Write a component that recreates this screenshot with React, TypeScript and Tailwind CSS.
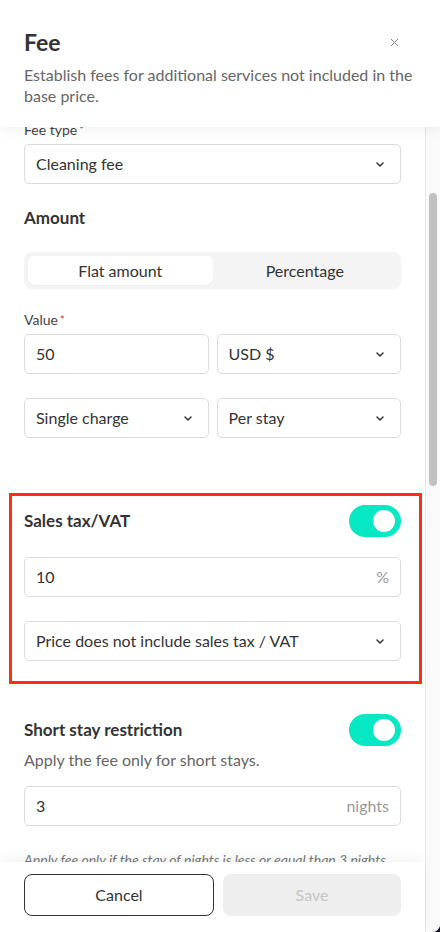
import { ReactNode } from "react";

function Chevron() {
  return (
    <svg width="8" height="5" viewBox="0 0 8 5" fill="none" className="shrink-0">
      <path d="M1 1 4 4 7 1" stroke="#333" strokeWidth="1.5" strokeLinecap="round" strokeLinejoin="round" />
    </svg>
  );
}

function SelectBox({ value }: { value: string }) {
  return (
    <div className="flex h-10 items-center justify-between rounded-[5px] border border-[#dcdcdc] bg-white pl-[11px] pr-[16px]">
      <span className="text-[16px] text-[#333]">{value}</span>
      <Chevron />
    </div>
  );
}

function TextBox({ value, suffix }: { value: string; suffix?: string }) {
  return (
    <div className="flex h-10 items-center justify-between rounded-[5px] border border-[#dcdcdc] bg-white pl-[11px] pr-[11px]">
      <span className="text-[16px] text-[#333]">{value}</span>
      {suffix ? <span className="text-[16px] text-[#9a9a9a]">{suffix}</span> : null}
    </div>
  );
}

function Label({ children }: { children: ReactNode }) {
  return (
    <div className="mb-[5px] text-[14px] leading-[18px] text-[#444]">
      {children}
      <span className="ml-[2px] align-top text-[11px] text-[#e0262b]">*</span>
    </div>
  );
}

function Toggle() {
  return (
    <div className="flex h-8 w-[52px] items-center justify-end rounded-full bg-[#06e8c3] pr-[6px]">
      <div className="h-[22px] w-[22px] rounded-full bg-white" />
    </div>
  );
}

export default function App() {
  return (
    <div className="h-[932px] w-[440px] bg-[#14142a]" style={{ fontFamily: "Lato, 'Noto Sans', sans-serif" }}>
      <div className="flex h-full w-full flex-col overflow-hidden rounded-br-[8px] bg-white">
        <header className="relative z-10 bg-white px-6 pb-[21px] pt-[28px] shadow-[0_4px_12px_rgba(0,0,0,0.05)]">
          <div className="flex items-center justify-between">
            <h1 className="text-[23px] font-bold leading-[28px] text-[#333]">Fee</h1>
            <svg width="9" height="9" viewBox="0 0 9 9" className="mr-[17px]">
              <path d="M1 1 8 8M8 1 1 8" stroke="#888" strokeWidth="1" />
            </svg>
          </div>
          <p className="mt-[8px] text-[16px] leading-[21px] text-[#666]">
            Establish fees for additional services not included in the base price.
          </p>
        </header>

        <div className="flex min-h-0 flex-1">
          <div className="flex min-w-0 flex-1 flex-col">
            <div className="min-h-0 flex-1 overflow-hidden">
              <div className="mt-[-6px] px-6">
                <Label>Fee type</Label>
                <SelectBox value="Cleaning fee" />

                <h2 className="mt-[22px] text-[17px] font-bold leading-[24px] text-[#333]">Amount</h2>
                <div className="mt-[22px] grid h-[37px] grid-cols-2 rounded-[8px] bg-[#f4f4f4] p-1">
                  <div className="flex items-center justify-center rounded-[7px] bg-white text-[16px] text-[#333] shadow-[0_1px_2px_rgba(0,0,0,0.04)]">
                    Flat amount
                  </div>
                  <div className="flex items-center justify-center text-[16px] text-[#333]">Percentage</div>
                </div>

                <div className="mt-[22px]">
                  <Label>Value</Label>
                  <div className="grid grid-cols-2 gap-2">
                    <TextBox value="50" />
                    <SelectBox value="USD $" />
                  </div>
                  <div className="mt-6 grid grid-cols-2 gap-2">
                    <SelectBox value="Single charge" />
                    <SelectBox value="Per stay" />
                  </div>
                </div>

                <section className="mt-[55px] ml-[-15px] mr-[-21px] border-[3px] border-[#ff2d12] pb-[20px] pl-[12px] pr-[18px] pt-[9px]">
                  <div className="flex items-center justify-between">
                    <h2 className="text-[17px] font-bold text-[#333]">Sales tax/VAT</h2>
                    <Toggle />
                  </div>
                  <div className="mt-5">
                    <TextBox value="10" suffix="%" />
                  </div>
                  <div className="mt-6">
                    <SelectBox value="Price does not include sales tax / VAT" />
                  </div>
                </section>

                <section className="mt-[30px]">
                  <div className="flex items-center justify-between">
                    <h2 className="text-[17px] font-bold text-[#333]">Short stay restriction</h2>
                    <Toggle />
                  </div>
                  <p className="mt-[3px] text-[16px] leading-[22px] text-[#666]">Apply the fee only for short stays.</p>
                  <div className="mt-[15px]">
                    <TextBox value="3" suffix="nights" />
                  </div>
                  <p className="mt-[24px] text-[14px] italic leading-[20px] text-[#777]">
                    Apply fee only if the stay of nights is less or equal than 3 nights.
                  </p>
                </section>
              </div>
            </div>

            <footer className="relative z-10 flex gap-[9px] bg-white px-6 pb-4 pt-3 shadow-[0_-4px_12px_rgba(0,0,0,0.05)]">
              <button className="h-[42px] w-[190px] rounded-[8px] border border-[#333] text-[16px] text-[#333]">Cancel</button>
              <button className="h-[42px] flex-1 rounded-[8px] bg-[#eeeeee] text-[16px] text-[#c4c4c4]">Save</button>
            </footer>
          </div>

          <div className="w-[15px] shrink-0 border-l border-[#e8e8e8] bg-[#fafafa] pt-[66px]">
            <div className="ml-[3px] h-[293px] w-[8px] rounded-full bg-[#c1c1c1]" />
          </div>
        </div>
      </div>
    </div>
  );
}
